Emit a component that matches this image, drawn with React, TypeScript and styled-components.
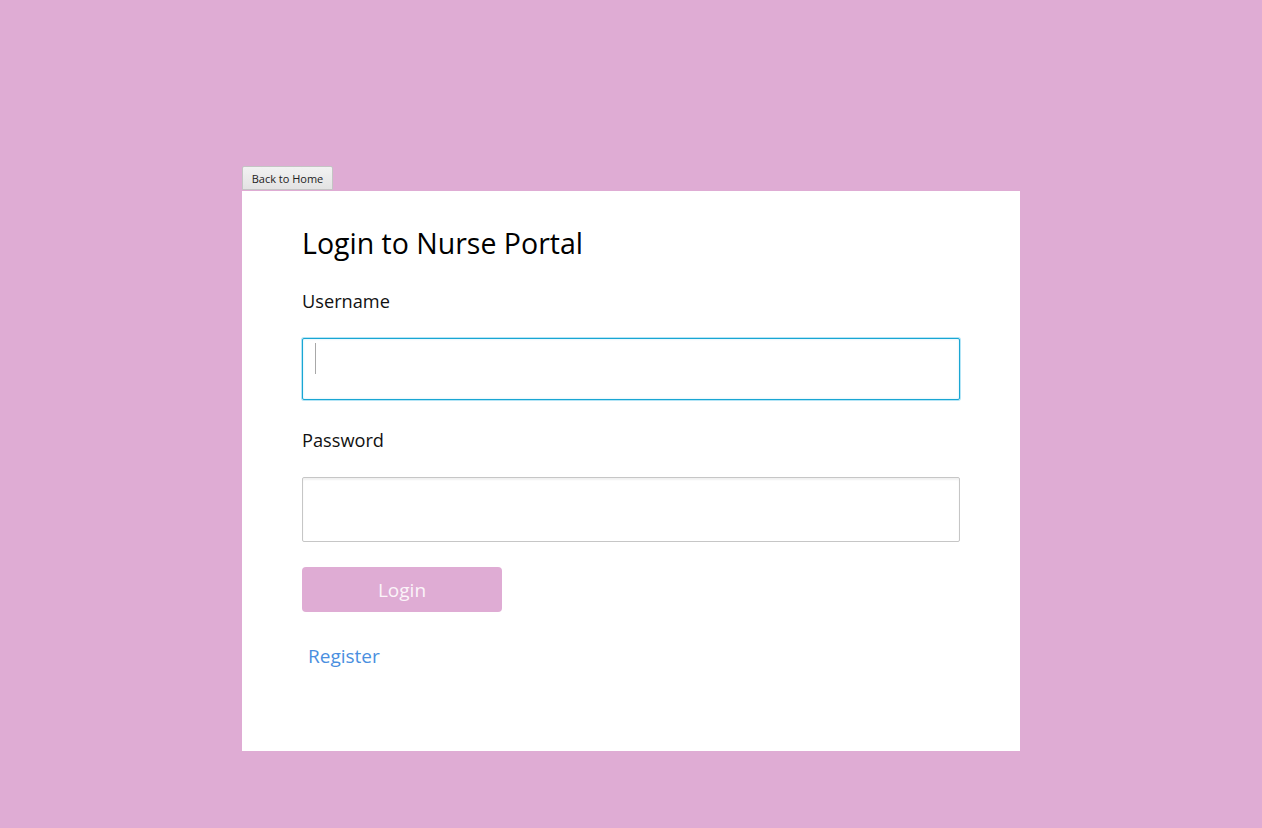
import React from "react";
import styled, { createGlobalStyle } from "styled-components";

const Global = createGlobalStyle`
  html, body { margin: 0; padding: 0; background: #dfacd4; }
  body { font-family: "Open Sans", "Noto Sans", sans-serif; }
`;

const Page = styled.div`
  min-height: 828px;
  padding: 166px 0 0 242px;
  box-sizing: border-box;
  display: flex;
  flex-direction: column;
  align-items: flex-start;
`;

const BackButton = styled.button`
  height: 24px;
  width: 91px;
  padding: 0;
  margin: 0 0 1px 0;
  font-family: "Open Sans", sans-serif;
  font-size: 11px;
  color: #222;
  background: linear-gradient(#f2f2f2, #e3e3e3);
  border: 1px solid #c4c4c4;
  border-radius: 2px 2px 0 0;
`;

const Card = styled.div`
  width: 778px;
  height: 560px;
  background: #fff;
  box-sizing: border-box;
  padding: 35px 60px 0 60px;
  display: flex;
  flex-direction: column;
  align-items: flex-start;
`;

const Title = styled.h1`
  margin: 0;
  font-size: 28.5px;
  line-height: 34px;
  font-weight: 400;
  color: #000;
`;

const Label = styled.label<{ $mt: number }>`
  margin-top: ${(p) => p.$mt}px;
  font-size: 18.2px;
  line-height: 24px;
  color: #111;
`;

const Field = styled.div<{ $focused?: boolean; $h: number }>`
  position: relative;
  margin-top: 25px;
  width: 658px;
  height: ${(p) => p.$h}px;
  box-sizing: border-box;
  border-radius: 2px;
  border: 1px solid ${(p) => (p.$focused ? "#19a6d3" : "#c6c6c6")};
  box-shadow: ${(p) =>
    p.$focused
      ? "0 0 0 1px rgba(40,180,230,0.35), inset 0 0 2px rgba(40,180,230,0.3)"
      : "inset 0 2px 2px rgba(0,0,0,0.06)"};
  background: #fff;
`;

const Input = styled.input`
  width: 100%;
  height: 100%;
  border: none;
  outline: none;
  background: transparent;
  box-sizing: border-box;
  padding: 0 12px;
  font-family: inherit;
  font-size: 18px;
`;

const Caret = styled.span`
  position: absolute;
  left: 12px;
  top: 4px;
  width: 1px;
  height: 31px;
  background: #a8a8a8;
`;

const LoginButton = styled.button`
  margin-top: 25px;
  width: 200px;
  height: 45px;
  border: none;
  border-radius: 4px;
  background: #dfacd4;
  color: #fbf4f9;
  font-family: inherit;
  font-size: 19px;
  padding: 0;
`;

const RegisterLink = styled.a`
  margin-top: 31px;
  margin-left: 6px;
  font-size: 19px;
  line-height: 26px;
  color: #4a8fe0;
  text-decoration: none;
`;

export default function App() {
  return (
    <>
      <Global />
      <Page>
        <BackButton>Back to Home</BackButton>
        <Card>
          <Title>Login to Nurse Portal</Title>
          <Label $mt={29}>Username</Label>
          <Field $focused $h={62}>
            <Input type="text" />
            <Caret />
          </Field>
          <Label $mt={28}>Password</Label>
          <Field $h={65}>
            <Input type="password" />
          </Field>
          <LoginButton>Login</LoginButton>
          <RegisterLink href="#">Register</RegisterLink>
        </Card>
      </Page>
    </>
  );
}
